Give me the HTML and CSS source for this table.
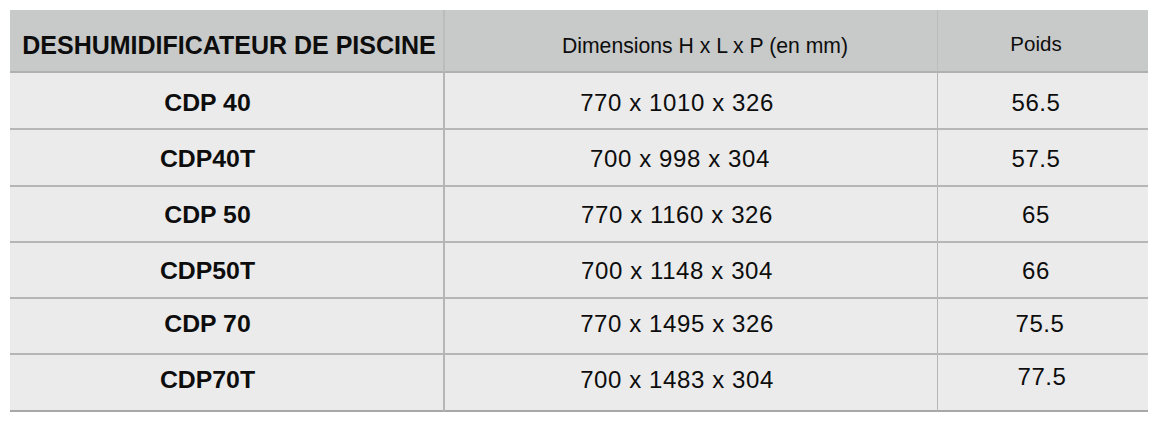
FILE: index.html
```html
<!DOCTYPE html>
<html lang="fr">
<head>
<meta charset="utf-8">
<title>Deshumidificateur de piscine</title>
<link rel="stylesheet" href="styles.css">
</head>
<body>
<div class="table">
  <div class="cell head c1">DESHUMIDIFICATEUR DE PISCINE</div>
  <div class="cell head c2">Dimensions H x L x P (en mm)</div>
  <div class="cell head c3">Poids</div>

  <div class="cell c1 r1">CDP 40</div>
  <div class="cell c2 r1">770 x 1010 x 326</div>
  <div class="cell c3 r1">56.5</div>

  <div class="cell c1 r2">CDP40T</div>
  <div class="cell c2 r2">700 x 998 x 304</div>
  <div class="cell c3 r2">57.5</div>

  <div class="cell c1">CDP 50</div>
  <div class="cell c2">770 x 1160 x 326</div>
  <div class="cell c3">65</div>

  <div class="cell c1">CDP50T</div>
  <div class="cell c2">700 x 1148 x 304</div>
  <div class="cell c3">66</div>

  <div class="cell c1 r5">CDP 70</div>
  <div class="cell c2 r5">770 x 1495 x 326</div>
  <div class="cell c3 r5">75.5</div>

  <div class="cell c1 last">CDP70T</div>
  <div class="cell c2 last">700 x 1483 x 304</div>
  <div class="cell c3 last">77.5</div>
</div>
</body>
</html>
```
FILE: styles.css
```css
html, body {
  margin: 0;
  padding: 0;
  background: #ffffff;
}

body {
  padding: 10px 10px 0 10px;
  font-family: "Liberation Sans", Arial, sans-serif;
  color: #0d0d0d;
}

.table {
  width: 1138px;
  display: grid;
  grid-template-columns: 435px 493px 210px;
  grid-template-rows: 63px 57px 57px 56px 56px 56px 57px;
  background: #ebebeb;
}

.cell {
  display: flex;
  align-items: center;
  justify-content: center;
  box-sizing: border-box;
  border-bottom: 2px solid #b6b6b6;
  font-size: 24px;
  letter-spacing: 0.6px;
  white-space: nowrap;
  padding-top: 2px;
}

.cell.c1 {
  border-right: 2px solid #b6b6b6;
  font-weight: bold;
  font-size: 24.8px;
  letter-spacing: 0;
  padding-right: 38px;
}

.cell.c2 {
  border-right: 1px solid #b6b6b6;
  padding-right: 28px;
}

.cell.c3 {
  padding-right: 14px;
}

.cell.head {
  background: #c8c9c9;
  border-bottom-color: #b0b0b0;
  padding-top: 10px;
  padding-right: 0;
  letter-spacing: 0;
}

.cell.head.c1 {
  font-size: 25px;
  padding-left: 5px;
  padding-right: 0;
  border-right-color: #bcbcbc;
}

.cell.head.c2 {
  font-size: 21.2px;
  padding-left: 28px;
  border-right-color: #bcbcbc;
}

.cell.head.c3 {
  font-size: 20.5px;
  padding-top: 6px;
  padding-right: 14px;
}

.cell.r1 {
  padding-top: 4px;
}

.cell.r2.c2 {
  padding-left: 6px;
}

.cell.r5 {
  padding-top: 0;
  padding-bottom: 4px;
}

.cell.r5.c3 {
  padding-right: 6px;
}

.cell.last {
  border-bottom-color: #a8a8a8;
  padding-top: 0;
  padding-bottom: 6px;
}

.cell.last.c3 {
  padding-right: 2px;
  padding-bottom: 12px;
}
```
